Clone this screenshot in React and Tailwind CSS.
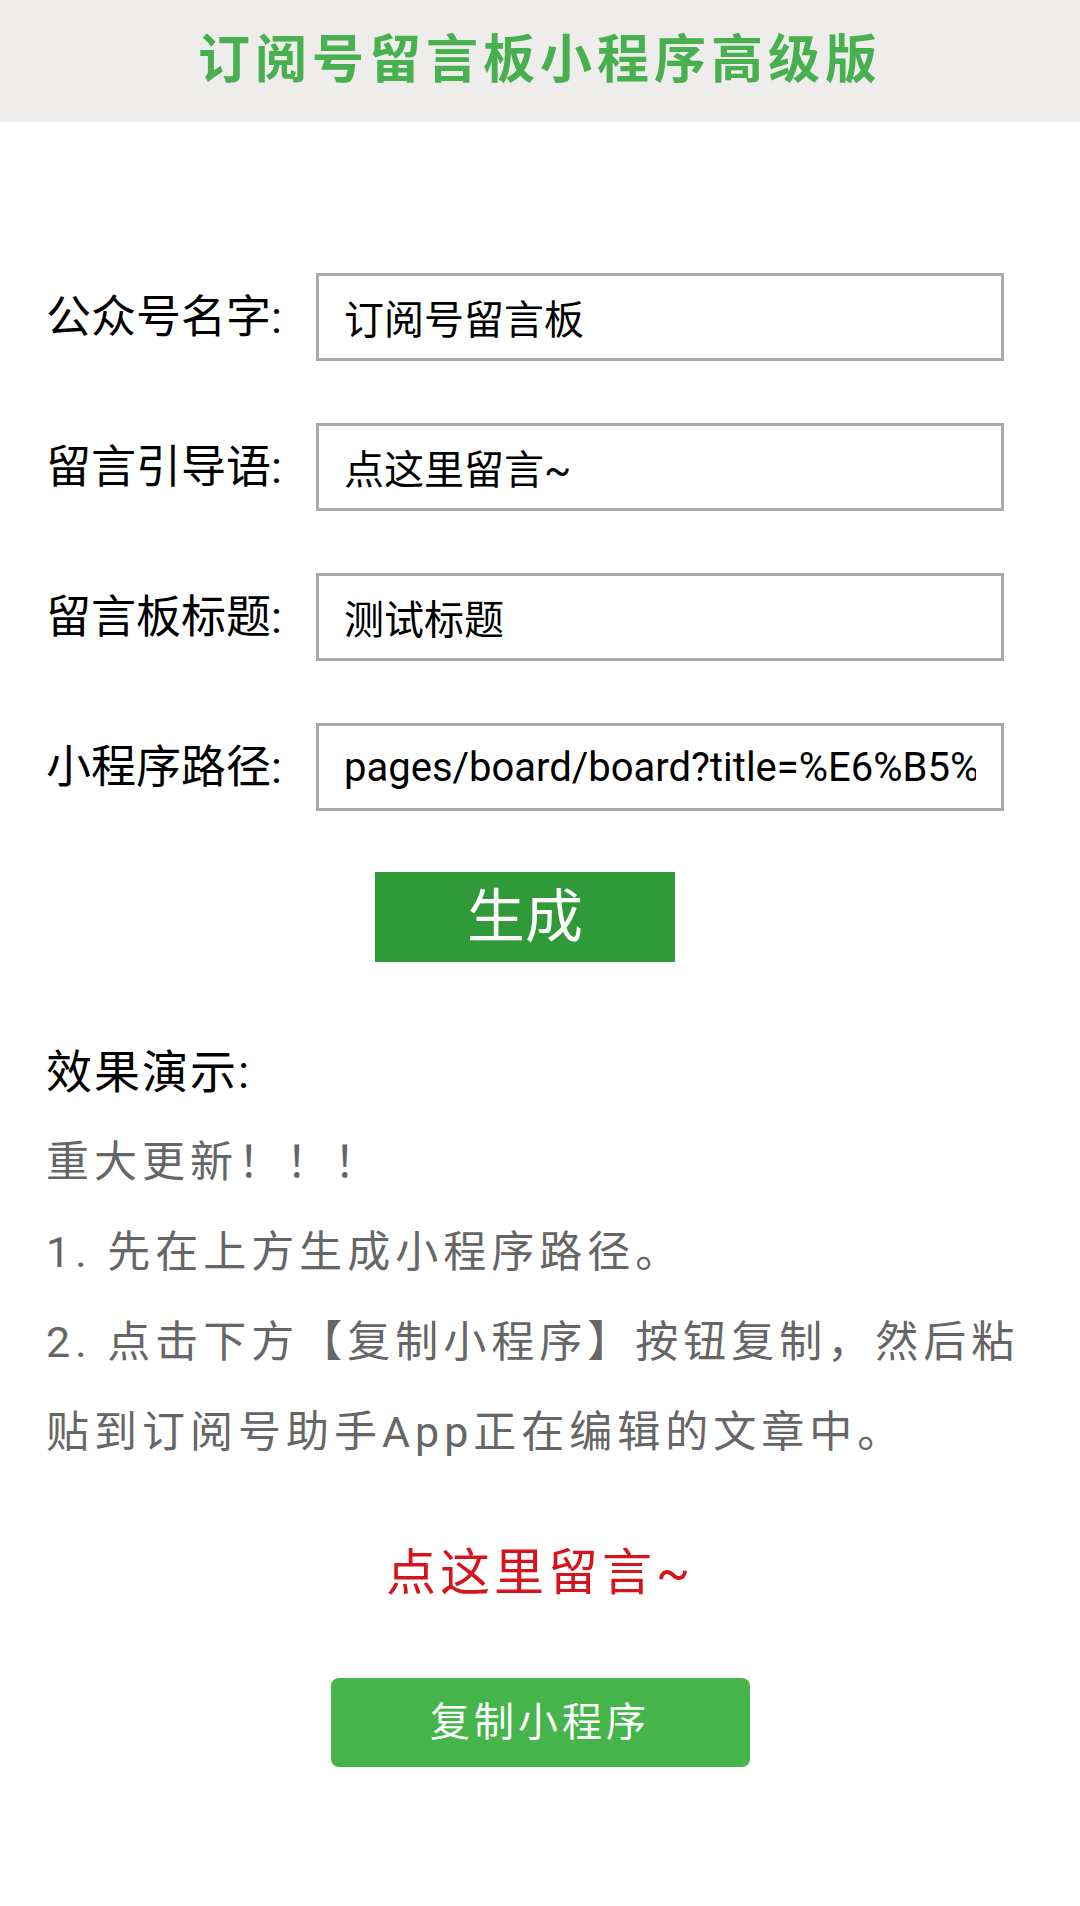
import React, { useState } from 'react';

const fields = [
    { label: '公众号名字:', value: '订阅号留言板' },
    { label: '留言引导语:', value: '点这里留言~' },
    { label: '留言板标题:', value: '测试标题' },
    {
        label: '小程序路径:',
        value: 'pages/board/board?title=%E6%B5%8B%E8%AF%95%E6%A0%87%E9%A2%98',
    },
];

const App = () => {
    const [values, setValues] = useState(fields.map(f => f.value));

    return (
        <div className="w-[1080px] min-h-[1906px] bg-white font-['Roboto','Noto_Sans_CJK_SC',sans-serif]">
            {/* Header */}
            <div className="h-[122px] bg-[#eeedeb] flex items-center justify-center">
                <h1 className="text-[52px] font-bold tracking-[5px] text-[#48b04f] leading-none">
                    订阅号留言板小程序高级版
                </h1>
            </div>

            {/* Form */}
            <div className="pt-[151px] pl-[46px] pr-[76px] flex flex-col gap-[62px]">
                {fields.map((field, index) => (
                    <div key={field.label} className="flex items-center">
                        <label className="w-[270px] shrink-0 text-[45px] text-black leading-none">
                            {field.label}
                        </label>
                        <input
                            value={values[index]}
                            onChange={e =>
                                setValues(prev =>
                                    prev.map((v, i) => (i === index ? e.target.value : v))
                                )
                            }
                            className="w-[688px] h-[88px] border-[3px] border-[#a9a9a9] px-[25px] text-[40px] text-black outline-none"
                        />
                    </div>
                ))}
            </div>

            <div className="pl-[375px] pt-[61px]">
                <button className="w-[300px] h-[90px] bg-[#2f9a37] text-white text-[58px] leading-none">
                    生成
                </button>
            </div>

            {/* Demo */}
            <div className="mt-[65px] px-[46px]">
                <p className="text-[46px] leading-[90px] tracking-[2px] text-black">效果演示:</p>
                <div className="text-[43px] leading-[90px] tracking-[5px] text-[#666666] w-[990px]">
                    <p>重大更新！！！</p>
                    <p>1. 先在上方生成小程序路径。</p>
                    <p>2. 点击下方【复制小程序】按钮复制，然后粘贴到订阅号助手App正在编辑的文章中。</p>
                </div>
            </div>

            <p className="mt-[51px] text-center text-[50px] leading-[90px] tracking-[4px] text-[#d6141c]">
                点这里留言~
            </p>

            <div className="flex justify-center pt-[60px]">
                <button className="w-[419px] h-[89px] rounded-[8px] bg-[#45b54b] text-white text-[40px] tracking-[4px]">
                    复制小程序
                </button>
            </div>
        </div>
    );
};

export default App;
